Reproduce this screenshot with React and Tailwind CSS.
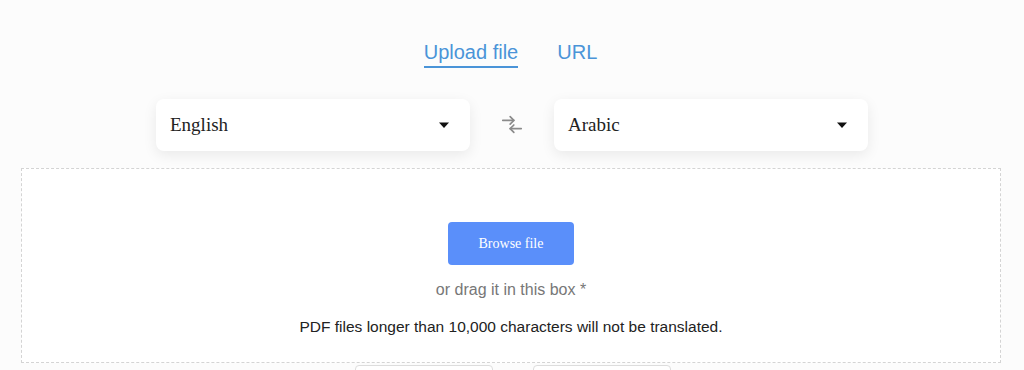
import React, { useState } from "react";

function Caret() {
  return (
    <svg width="12" height="7" viewBox="0 0 12 7">
      <path d="M1 0.5 L11 0.5 L6 6 Z" fill="#111" />
    </svg>
  );
}

function SwapIcon() {
  return (
    <svg width="26" height="22" viewBox="0 0 26 22" fill="none" stroke="#8a8a8a" strokeWidth="1.8" strokeLinecap="round" strokeLinejoin="round">
      <path d="M3 6 H15" />
      <path d="M11 2 L15 6 L11 10" />
      <path d="M23 15 H11" />
      <path d="M15 11 L11 15 L15 19" />
    </svg>
  );
}

function LangSelect({ value }) {
  return (
    <div className="w-[314px] h-[52px] bg-white rounded-lg shadow-[0_4px_14px_rgba(0,0,0,0.08)] flex items-center justify-between pl-[14px] pr-[20px]">
      <span className="text-[19px] text-[#222] font-['Liberation_Serif',serif]">{value}</span>
      <Caret />
    </div>
  );
}

export default function App() {
  const [tab, setTab] = useState("file");

  return (
    <div className="w-[1024px] h-[370px] overflow-hidden bg-[#fcfcfc] font-['Liberation_Sans',Arial,sans-serif]">
      <div className="flex justify-center gap-[39px] pt-[40px] pr-[3px]">
        <button
          onClick={() => setTab("file")}
          className="text-[20px] text-[#4a94d8] pb-[2px] border-b-2 border-[#4a94d8] leading-[24px]"
        >
          Upload file
        </button>
        <button
          onClick={() => setTab("url")}
          className="text-[20px] text-[#4a94d8] pb-[2px] border-b-2 border-transparent leading-[24px]"
        >
          URL
        </button>
      </div>

      <div className="flex justify-center items-center gap-[30px] mt-[31px]">
        <LangSelect value="English" />
        <div className="w-[24px] flex justify-center">
          <SwapIcon />
        </div>
        <LangSelect value="Arabic" />
      </div>

      <div className="mx-[21px] w-[980px] mt-[17px] h-[195px] bg-white border border-dashed border-[#d4d4d4] flex flex-col items-center">
        <button className="mt-[53px] w-[126px] h-[43px] rounded bg-[#5a8ffa] text-white text-[14px] font-['Liberation_Serif',serif]">
          Browse file
        </button>
        <p className="mt-[13px] text-[16px] text-[#777]">or drag it in this box *</p>
        <p className="mt-[13px] text-[15.5px] text-[#222]">
          PDF files longer than 10,000 characters will not be translated.
        </p>
      </div>

      <div className="flex justify-center gap-[40px] mt-[2px] pl-[2px]">
        <div className="w-[138px] h-[10px] border border-[#ddd] rounded-t bg-white" />
        <div className="w-[138px] h-[10px] border border-[#ddd] rounded-t bg-white" />
      </div>
    </div>
  );
}
